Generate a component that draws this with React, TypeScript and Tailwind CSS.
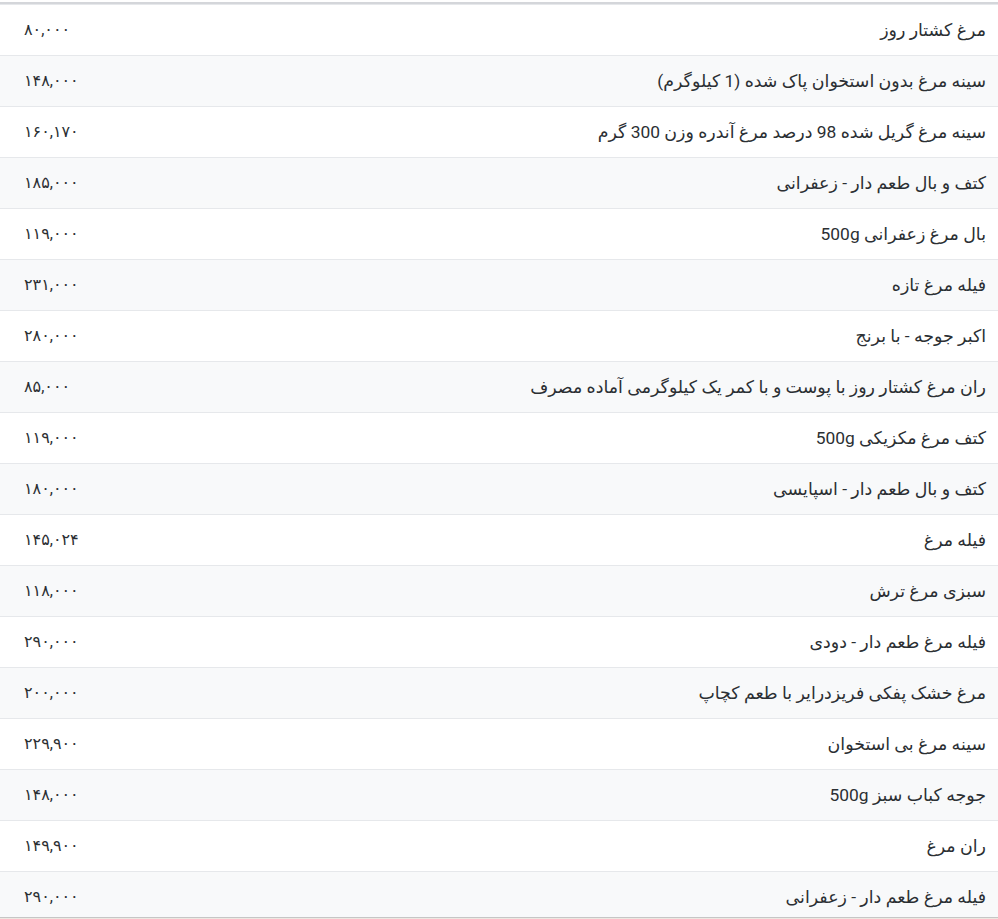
const rows: [string, string][] = [
  ["مرغ کشتار روز", "۸۰,۰۰۰"],
  ["سینه مرغ بدون استخوان پاک شده (1 کیلوگرم)", "۱۴۸,۰۰۰"],
  ["سینه مرغ گریل شده 98 درصد مرغ آندره وزن 300 گرم", "۱۶۰,۱۷۰"],
  ["کتف و بال طعم دار - زعفرانی", "۱۸۵,۰۰۰"],
  ["بال مرغ زعفرانی 500g", "۱۱۹,۰۰۰"],
  ["فیله مرغ تازه", "۲۳۱,۰۰۰"],
  ["اکبر جوجه - با برنج", "۲۸۰,۰۰۰"],
  ["ران مرغ کشتار روز با پوست و با کمر یک کیلوگرمی آماده مصرف", "۸۵,۰۰۰"],
  ["کتف مرغ مکزیکی 500g", "۱۱۹,۰۰۰"],
  ["کتف و بال طعم دار - اسپایسی", "۱۸۰,۰۰۰"],
  ["فیله مرغ", "۱۴۵,۰۲۴"],
  ["سبزی مرغ ترش", "۱۱۸,۰۰۰"],
  ["فیله مرغ طعم دار - دودی", "۲۹۰,۰۰۰"],
  ["مرغ خشک پفکی فریزدرایر با طعم کچاپ", "۲۰۰,۰۰۰"],
  ["سینه مرغ بی استخوان", "۲۲۹,۹۰۰"],
  ["جوجه کباب سبز 500g", "۱۴۸,۰۰۰"],
  ["ران مرغ", "۱۴۹,۹۰۰"],
  ["فیله مرغ طعم دار - زعفرانی", "۲۹۰,۰۰۰"],
];

export default function App() {
  return (
    <div className="min-h-screen bg-[#eee8e1]">
      <div
        dir="rtl"
        className="h-[918px] overflow-hidden bg-white pt-[2px] border-b border-[#c6c6c6] text-[#2b2f33]"
        style={{ fontFamily: "Roboto, 'DejaVu Sans', sans-serif" }}
      >
        <div className="border-t-2 border-[#d4d6da]">
          {rows.map(([name, price], i) => (
            <div
              key={i}
              className={`flex items-center justify-between h-[51px] border-t border-[#e6e8eb] pr-[12px] pl-[24px] ${
                i % 2 === 1 ? "bg-[#f8f9fa]" : "bg-white"
              }`}
            >
              <span className="text-[17.4px]">{name}</span>
              <span dir="ltr" className="w-[80px] text-left text-[16px]">
                {price}
              </span>
            </div>
          ))}
        </div>
      </div>
    </div>
  );
}
